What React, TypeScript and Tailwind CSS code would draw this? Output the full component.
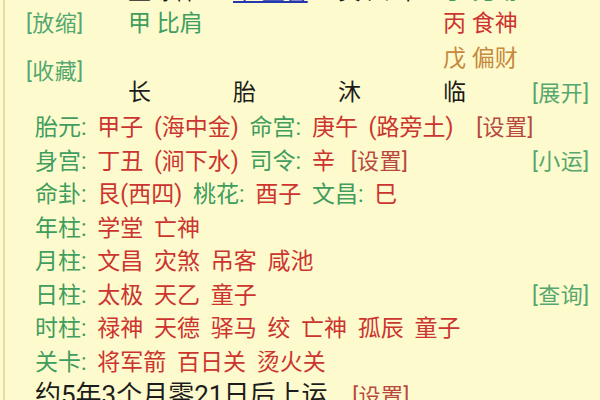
import React from "react";

const G = "text-[#3f9d5e]";
const R = "text-[#cc3430]";

function L({ children }: { children: React.ReactNode }) {
  return <span className={G}>{children}</span>;
}
function V({ children }: { children: React.ReactNode }) {
  return <span className={R}>{children}</span>;
}
function SetBtn({ className = "" }: { className?: string }) {
  return (
    <span className={`text-[22px] tracking-[0.5px] text-[#b8483f] ${className}`}>[设置]</span>
  );
}
function GreenBtn({ label }: { label: string }) {
  return <span className="text-[22px] tracking-[0.5px] text-[#55a770]">[{label}]</span>;
}

function Row({ children, right }: { children: React.ReactNode; right?: React.ReactNode }) {
  return (
    <div className="flex h-[33.5px] leading-[33.5px]">
      <div className="flex-1 whitespace-nowrap pl-[30px]">{children}</div>
      <div className="w-[68px] shrink-0">{right}</div>
    </div>
  );
}

export default function App() {
  return (
    <div className="w-[600px] h-[400px] overflow-hidden bg-[#fdfbcd] pl-[3px] font-['Roboto','Noto_Sans_CJK_SC',sans-serif] text-[23px] [word-spacing:5px]">
      <div className="h-full border-l-2 border-[#e6dfa4]">
        {/* top section */}
        <div className="flex h-[111px]">
          <div className="w-[123px] shrink-0 pl-[21px] flex flex-col">
            <div className="mt-[6px] h-[36px] leading-[36px]">
              <GreenBtn label="放缩" />
            </div>
            <div className="mt-[12px] h-[36px] leading-[36px]">
              <GreenBtn label="收藏" />
            </div>
          </div>
          <div className="w-[404px] shrink-0 flex flex-col">
            <div className="mt-[-20px] h-[24px] leading-[24px] grid grid-cols-[105px_105px_105px_1fr] whitespace-nowrap [word-spacing:0px]">
              <span className="text-[#1c1c1c]">正缘神</span>
              <span className="text-[#2436b0] underline">甲 正官</span>
              <span className="text-[#1c1c1c]">黄 四 年</span>
              <span className={G}>丁 比劫</span>
            </div>
            <div className="mt-[2px] h-[36px] leading-[36px] grid grid-cols-[105px_105px_105px_1fr] whitespace-nowrap [word-spacing:0px]">
              <span className={G}>甲 比肩</span>
              <span />
              <span />
              <span className={R}>丙 食神</span>
            </div>
            <div className="h-[34px] leading-[34px] grid grid-cols-[105px_105px_105px_1fr] whitespace-nowrap [word-spacing:0px]">
              <span />
              <span />
              <span />
              <span className="text-[#c6883c]">戊 偏财</span>
            </div>
            <div className="h-[34px] leading-[34px] grid grid-cols-[105px_105px_105px_1fr] text-[#1c1c1c]">
              <span>长</span>
              <span>胎</span>
              <span>沐</span>
              <span>临</span>
            </div>
          </div>
          <div className="flex-1 pt-[77px]">
            <div className="h-[34px] leading-[34px]">
              <GreenBtn label="展开" />
            </div>
          </div>
        </div>

        <div className="flex flex-col">
          <Row>
            <L>胎元:</L> <V>甲子 (海中金)</V> <L>命宫:</L> <V>庚午 (路旁土)</V>{" "}
            <SetBtn className="ml-[12px]" />
          </Row>
          <Row right={<GreenBtn label="小运" />}>
            <L>身宫:</L> <V>丁丑 (涧下水)</V> <L>司令:</L> <V>辛</V> <SetBtn className="ml-[5px]" />
          </Row>
          <Row>
            <L>命卦:</L> <V>艮(西四)</V> <L>桃花:</L> <V>酉子</V> <L>文昌:</L> <V>巳</V>
          </Row>
          <Row>
            <L>年柱:</L> <V>学堂 亡神</V>
          </Row>
          <Row>
            <L>月柱:</L> <V>文昌 灾煞 吊客 咸池</V>
          </Row>
          <Row right={<GreenBtn label="查询" />}>
            <L>日柱:</L> <V>太极 天乙 童子</V>
          </Row>
          <Row>
            <L>时柱:</L> <V>禄神 天德 驿马 绞 亡神 孤辰 童子</V>
          </Row>
          <Row>
            <L>关卡:</L> <V>将军箭 百日关 烫火关</V>
          </Row>
          <Row>
            <span className="text-[26px] [word-spacing:0px] text-[#1c1c1c]">约5年3个月零21日后上运</span>{" "}
            <SetBtn className="ml-[14px]" />
          </Row>
        </div>
      </div>
    </div>
  );
}
